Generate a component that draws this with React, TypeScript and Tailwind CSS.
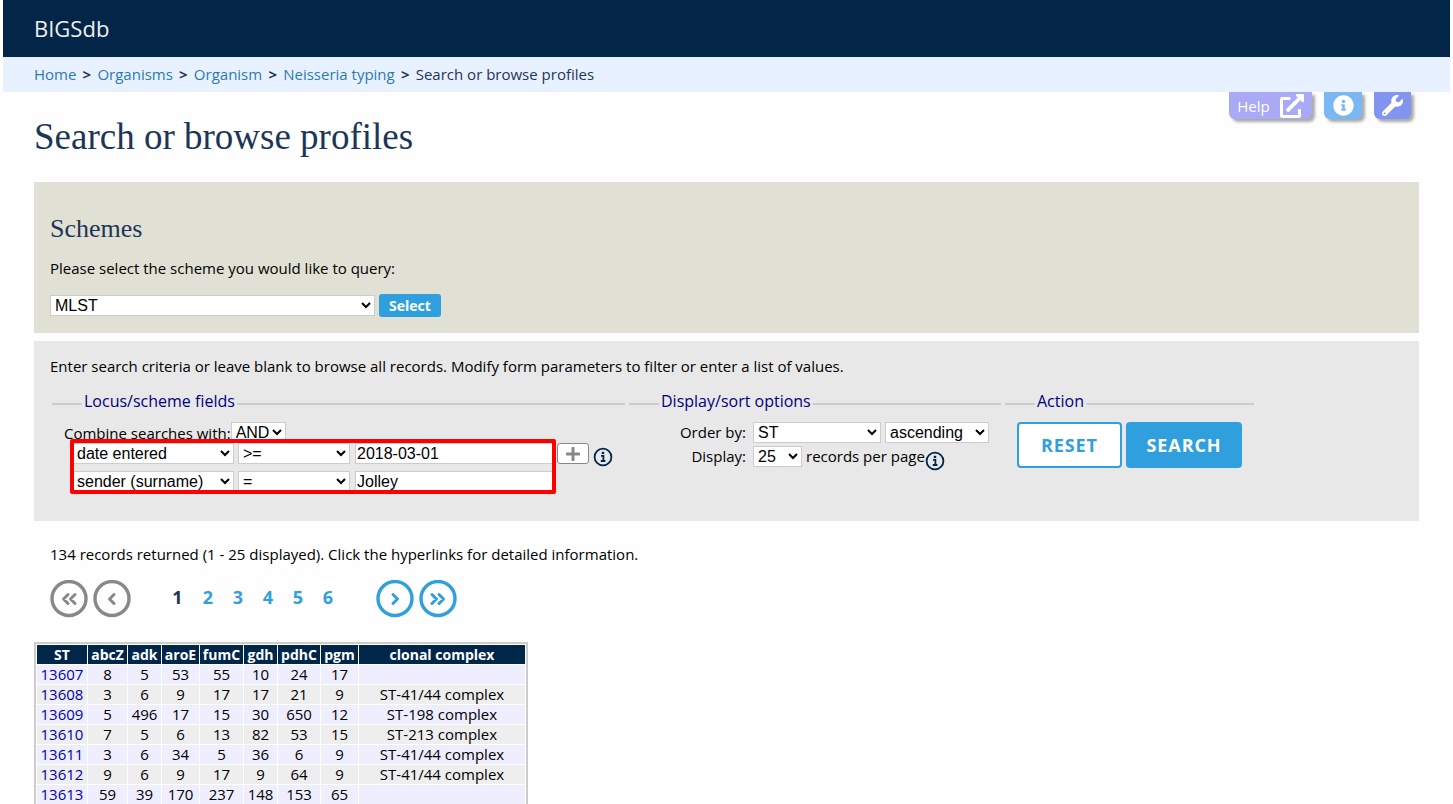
import { FaExternalLinkAlt, FaInfoCircle, FaPlus, FaWrench } from 'react-icons/fa';

interface IProfile {
  st: string
  alleles: number[]
  complex: string
}

const loci = [
  { name: 'abcZ', width: 'w-[39px]' },
  { name: 'adk', width: 'w-[33px]' },
  { name: 'aroE', width: 'w-[37px]' },
  { name: 'fumC', width: 'w-[43px]' },
  { name: 'gdh', width: 'w-[33px]' },
  { name: 'pdhC', width: 'w-[42px]' },
  { name: 'pgm', width: 'w-[37px]' },
];

const profiles: IProfile[] = [
  { st: '13607', alleles: [8, 5, 53, 55, 10, 24, 17], complex: '' },
  { st: '13608', alleles: [3, 6, 9, 17, 17, 21, 9], complex: 'ST-41/44 complex' },
  { st: '13609', alleles: [5, 496, 17, 15, 30, 650, 12], complex: 'ST-198 complex' },
  { st: '13610', alleles: [7, 5, 6, 13, 82, 53, 15], complex: 'ST-213 complex' },
  { st: '13611', alleles: [3, 6, 34, 5, 36, 6, 9], complex: 'ST-41/44 complex' },
  { st: '13612', alleles: [9, 6, 9, 17, 9, 64, 9], complex: 'ST-41/44 complex' },
  { st: '13613', alleles: [59, 39, 170, 237, 148, 153, 65], complex: '' },
];

const crumbs = ['Home', 'Organisms', 'Organism', 'Neisseria typing'];

const field = "h-[21px] border border-[#ccc] bg-white font-['Liberation_Sans',sans-serif] text-base leading-[18px] text-black";

const Select = ({ label, options, className }: { label: string, options: string[], className: string }) => (
  <select aria-label={label} className={`${field} ${className}`}>
    {options.map(option => <option key={option}>{option}</option>)}
  </select>
);

// Outlined info button used beside the form fields
const InfoButton = ({ label }: { label: string }) => (
  <button type="button" aria-label={label} className="block text-[#002649]">
    <svg width="20" height="20" viewBox="0 0 20 20" fill="none" stroke="currentColor">
      <circle cx="10" cy="10" r="8.4" strokeWidth="1.8" />
      <path d="M8 8.8h2.4v5M7.8 14h4.6" strokeWidth="1.8" />
      <rect x="8.8" y="4.8" width="2.4" height="2.3" fill="currentColor" stroke="none" />
    </svg>
  </button>
);

const PageArrow = ({ label, path }: { label: string, path: string }) => (
  <button type="button" aria-label={label}>
    <svg width="38" height="38" viewBox="0 0 38 38" fill="none" stroke="currentColor">
      <circle cx="19" cy="18.5" r="17" strokeWidth="3.4" />
      <path d={path} strokeWidth="3" strokeLinecap="round" strokeLinejoin="round" />
    </svg>
  </button>
);

const legend = 'ml-[30px] h-6 px-0.5 text-base leading-[18px] text-[#000080]';

const QueryForm = () => (
  <form className="mt-2 bg-[#e8e8e8] px-4 pt-[13px] pb-7" onSubmit={(e) => e.preventDefault()}>
    <p>Enter search criteria or leave blank to browse all records. Modify form parameters to filter or enter a list of values.</p>
    <div className="mt-3.5 ml-0.5 flex flex-wrap items-start gap-1">
      <fieldset className="w-[573px] border-t-2 border-[#ccc]">
        <legend className={legend}>Locus/scheme fields</legend>
        <div className="mt-1.5 ml-3 flex h-[21px] items-center">
          <label htmlFor="combine">Combine searches with:</label>
          <select id="combine" className={`${field} w-[55px]`}>
            <option>AND</option>
            <option>OR</option>
          </select>
        </div>
        <div className="ml-[18px] flex h-[50px] items-start">
          <div className="relative flex w-[486px] flex-col gap-[7px] pl-0.5">
            <div className="flex h-[21px] items-center gap-1">
              <Select label="Field 1" options={['date entered', 'ST', 'clonal complex']} className="w-[162px]" />
              <Select label="Operator 1" options={['>=', '=', 'contains']} className="w-[112px]" />
              <input aria-label="Value 1" defaultValue="2018-03-01" className={`${field} ml-px min-w-0 flex-1 px-px`} />
            </div>
            <div className="flex h-[21px] items-center gap-1">
              <Select label="Field 2" options={['sender (surname)', 'ST', 'clonal complex']} className="w-[162px]" />
              <Select label="Operator 2" options={['=', '>=', 'contains']} className="w-[112px]" />
              <input aria-label="Value 2" defaultValue="Jolley" className={`${field} ml-px min-w-0 flex-1 px-px`} />
            </div>
            <div className="pointer-events-none absolute inset-x-0 -top-1 -bottom-0.5 rounded-xs border-4 border-[#f00]" />
          </div>
          <button type="button" aria-label="Add field" className="ml-px flex h-[21px] w-8 items-center justify-center rounded-[3px] border border-[#888] bg-white text-[#888]">
            <FaPlus size={16} />
          </button>
          <div className="mt-1 ml-1">
            <InfoButton label="Search field help" />
          </div>
        </div>
      </fieldset>
      <fieldset className="w-[372px] border-t-2 border-[#ccc]">
        <legend className={legend}>Display/sort options</legend>
        <div className="mt-1.5 flex h-[21px] items-center">
          <label htmlFor="order" className="w-[117px] pb-px text-right">Order by:</label>
          <select id="order" className={`${field} ml-[7px] w-32`}>
            <option>ST</option>
            <option>abcZ</option>
          </select>
          <Select label="Direction" options={['ascending', 'descending']} className="ml-1 w-[104px]" />
        </div>
        <div className="mt-[3px] flex h-[21px] items-center">
          <label htmlFor="display" className="w-[117px] pb-px text-right">Display:</label>
          <select id="display" className={`${field} ml-[7px] w-[49px]`}>
            <option>25</option>
            <option>50</option>
          </select>
          <span className="ml-1 pb-px">records per page</span>
          <div className="pt-2">
            <InfoButton label="Records per page help" />
          </div>
        </div>
      </fieldset>
      <fieldset className="w-[249px] border-t-2 border-[#ccc]">
        <legend className={legend}>Action</legend>
        <div className="mt-1.5 ml-3 flex gap-1 text-lg font-bold tracking-wider">
          <button type="reset" className="h-[46px] w-[105px] rounded border-2 border-[#2f9fde] bg-white text-[#2f9fde]">RESET</button>
          <button type="submit" className="h-[46px] w-[116px] rounded bg-[#2f9fde] text-white">SEARCH</button>
        </div>
      </fieldset>
    </div>
  </form>
);

const Pager = () => (
  <nav aria-label="Result pages" className="mt-3.5 ml-4 flex h-[38px] items-center">
    <div className="flex gap-[5px] text-[#888]">
      <PageArrow label="First page" path="M18 14.5 13.5 19l4.5 4.5M25 14.5 20.5 19l4.5 4.5" />
      <PageArrow label="Previous page" path="M21 14.5 16.5 19l4.5 4.5" />
    </div>
    <div className="ml-[31px] flex pb-1 text-lg font-bold text-[#2f9fde]">
      <span className="w-[31px] text-center text-[#1d3557]">1</span>
      {[2, 3, 4, 5, 6].map(page => (
        <a key={page} href="#" className="w-[30px] text-center">{page}</a>
      ))}
    </div>
    <div className="ml-[33px] flex gap-[5px] text-[#2f9fde]">
      <PageArrow label="Next page" path="M17 14.5 21.5 19 17 23.5" />
      <PageArrow label="Last page" path="M13 14.5 17.5 19 13 23.5M20 14.5 24.5 19 20 23.5" />
    </div>
  </nav>
);

const ResultsTable = () => (
  <table className="mt-6 w-[494px] table-fixed border-separate border-spacing-px border-2 border-[#ccc] text-center leading-[19px]">
    <thead>
      <tr className="h-[19px] bg-[#002649] text-sm leading-[19px] text-white">
        <th className="w-[50px] p-0">ST</th>
        {loci.map(locus => (
          <th key={locus.name} className={`${locus.width} p-0`}>{locus.name}</th>
        ))}
        <th className="p-0">clonal complex</th>
      </tr>
    </thead>
    <tbody>
      {profiles.map(profile => (
        <tr key={profile.st} className="h-[19px] odd:bg-[#eef] even:bg-[#eee]">
          <td className="p-0"><a href="#" className="text-[#0000b4]">{profile.st}</a></td>
          {profile.alleles.map((allele, index) => (
            <td key={index} className="p-0">{allele}</td>
          ))}
          <td className="p-0">{profile.complex}</td>
        </tr>
      ))}
    </tbody>
  </table>
);

const tab = 'flex h-[27px] items-center justify-center rounded-b-md text-white shadow-[3px_3px_3px_#aaa]';

export default function App() {
  return (
    <div className="min-h-screen bg-[#fefefe] px-[3px] font-['Open_Sans',sans-serif] text-[15px] leading-6 text-black">
      <header className="flex h-[57px] items-center bg-[#032548] pb-0.5 pl-[31px] text-[22px] text-[#eee]">BIGSdb</header>
      <nav aria-label="Breadcrumb" className="flex h-[35px] items-center bg-[#e8f1ff] pb-0.5 pl-[31px] text-[#1d3557]">
        {crumbs.map(crumb => (
          <div key={crumb} className="flex">
            <a href="#" className="text-[#2a7bb0]">{crumb}</a>
            <span className="w-[21px] text-center font-bold">&gt;</span>
          </div>
        ))}
        <span>Search or browse profiles</span>
      </nav>
      <main className="px-[31px]">
        <div className="flex items-start justify-between">
          <h1 className="py-[23px] font-['Liberation_Serif',serif] text-[37px] leading-[44px] text-[#1d3557]">Search or browse profiles</h1>
          <div className="mr-2 flex">
            <a href="#" className={`${tab} w-[83px] gap-2.5 bg-[#a9a9f5]`}>
              Help <FaExternalLinkAlt size={24} />
            </a>
            <button type="button" aria-label="Information" className={`${tab} ml-3 w-[38px] bg-[#7ab8f5]`}>
              <FaInfoCircle size={21} />
            </button>
            <button type="button" aria-label="Options" className={`${tab} ml-3 w-[37px] bg-[#8094f0]`}>
              <FaWrench size={21} />
            </button>
          </div>
        </div>
        <section className="bg-[#e0e0d4] px-4 pt-[31px] pb-4">
          <h2 className="font-['Liberation_Serif',serif] text-[26px] leading-8 text-[#1d3557]">Schemes</h2>
          <p className="mt-[11px]">Please select the scheme you would like to query:</p>
          <div className="mt-[13px] flex h-6 items-center gap-1">
            <Select label="Scheme" options={['MLST', 'cgMLST']} className="w-[325px]" />
            <button type="button" className="h-[23px] w-[62px] rounded-[3px] bg-[#2f9fde] text-sm leading-[23px] font-bold text-white">Select</button>
          </div>
        </section>
        <QueryForm />
        <p className="mt-[21px] ml-4">134 records returned (1 - 25 displayed). Click the hyperlinks for detailed information.</p>
        <Pager />
        <ResultsTable />
      </main>
    </div>
  );
}
